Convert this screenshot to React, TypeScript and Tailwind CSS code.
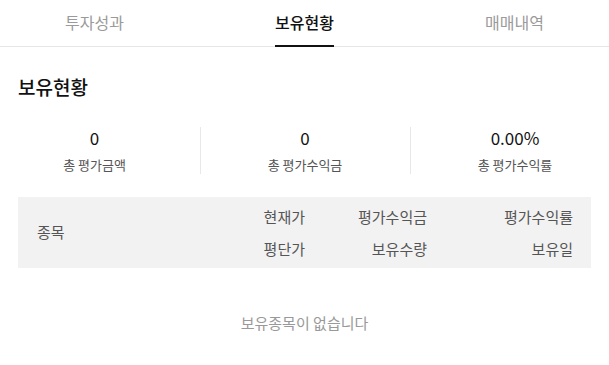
const font = { fontFamily: '"Noto Sans CJK KR", "Noto Sans", sans-serif' }

const tabs = ['투자성과', '보유현황', '매매내역']

const stats = [
  { value: '0', label: '총 평가금액' },
  { value: '0', label: '총 평가수익금' },
  { value: '0.00%', label: '총 평가수익률' },
]

export default function App() {
  const active = 1

  return (
    <div className="w-[609px] h-[365px] overflow-hidden bg-white" style={font}>
      {/* Tabs */}
      <div className="flex justify-center h-[47px] border-b border-[#e6e6e6]">
        {tabs.map((t, i) => (
          <div key={t} className="w-[210px] shrink-0 flex justify-center">
            <div
              className={
                'h-[47px] pb-[2px] flex items-center text-[16px] leading-none border-b-2 ' +
                (i === active ? 'text-[#111] border-[#111] font-medium' : 'text-[#9a9a9a] border-transparent')
              }
            >
              {t}
            </div>
          </div>
        ))}
      </div>

      {/* Title */}
      <h2 className="px-[18px] pt-[27px] text-[19px] leading-[26px] font-medium text-[#111]">보유현황</h2>

      {/* Summary */}
      <div className="flex justify-center mt-[27px]">
        {stats.map((s, i) => (
          <div
            key={s.label}
            className={'w-[210px] shrink-0 flex flex-col items-center ' + (i > 0 ? 'border-l border-[#e8e8e8]' : '')}
          >
            <div className="text-[17px] leading-[22px] text-[#111]">{s.value}</div>
            <div className="mt-[7px] text-[13px] leading-[18px] text-[#555]">{s.label}</div>
          </div>
        ))}
      </div>

      {/* Table header */}
      <div className="mx-[18px] mt-[23px] h-[71px] bg-[#f2f2f2] flex items-center pl-[19px] pr-[18px] text-[15px] text-[#555]">
        <div className="flex-1">종목</div>
        <div className="w-[80px] flex flex-col items-end gap-[11px] leading-[21px]">
          <span>현재가</span>
          <span>평단가</span>
        </div>
        <div className="w-[122px] flex flex-col items-end gap-[11px] leading-[21px]">
          <span>평가수익금</span>
          <span>보유수량</span>
        </div>
        <div className="w-[146px] flex flex-col items-end gap-[11px] leading-[21px]">
          <span>평가수익률</span>
          <span>보유일</span>
        </div>
      </div>

      {/* Empty */}
      <div className="mt-[45px] text-center text-[15px] leading-[20px] text-[#999]">보유종목이 없습니다</div>
    </div>
  )
}
